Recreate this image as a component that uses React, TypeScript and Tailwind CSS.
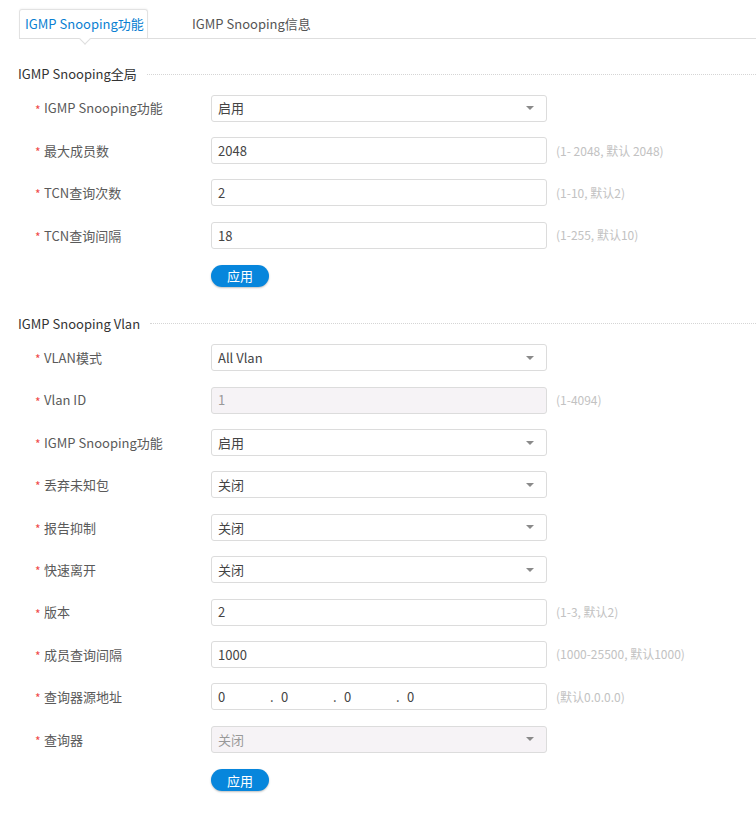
import React from "react";

type Row = {
  label: string;
  kind: "select" | "input" | "ip";
  value?: string;
  hint?: string;
  disabled?: boolean;
};

const globalRows: Row[] = [
  { label: "IGMP Snooping功能", kind: "select", value: "启用" },
  { label: "最大成员数", kind: "input", value: "2048", hint: "(1- 2048, 默认 2048)" },
  { label: "TCN查询次数", kind: "input", value: "2", hint: "(1-10, 默认2)" },
  { label: "TCN查询间隔", kind: "input", value: "18", hint: "(1-255, 默认10)" },
];

const vlanRows: Row[] = [
  { label: "VLAN模式", kind: "select", value: "All Vlan" },
  { label: "Vlan ID", kind: "input", value: "1", hint: "(1-4094)", disabled: true },
  { label: "IGMP Snooping功能", kind: "select", value: "启用" },
  { label: "丢弃未知包", kind: "select", value: "关闭" },
  { label: "报告抑制", kind: "select", value: "关闭" },
  { label: "快速离开", kind: "select", value: "关闭" },
  { label: "版本", kind: "input", value: "2", hint: "(1-3, 默认2)" },
  { label: "成员查询间隔", kind: "input", value: "1000", hint: "(1000-25500, 默认1000)" },
  { label: "查询器源地址", kind: "ip", hint: "(默认0.0.0.0)" },
  { label: "查询器", kind: "select", value: "关闭", disabled: true },
];

function Field({ row }: { row: Row }) {
  const box =
    "w-[336px] h-[27px] flex items-center rounded-[3px] border " +
    (row.disabled ? "bg-[#f6f3f6] border-[#dcdcdc] text-[#999]" : "bg-white border-[#dcdcdc] text-[#444]");

  if (row.kind === "select") {
    return (
      <div className={box + " pl-[6px] pr-[12px] justify-between"}>
        <span>{row.value}</span>
        {/* arrow */}
        <span className="w-0 h-0 border-l-[4px] border-r-[4px] border-t-[4px] border-l-transparent border-r-transparent border-t-[#8a8a8a]" />
      </div>
    );
  }
  if (row.kind === "ip") {
    return (
      <div className={box + " pl-[6px]"}>
        {[0, 1, 2, 3].map((i) => (
          <React.Fragment key={i}>
            <span className="w-[52px]">0</span>
            {i < 3 && <span className="w-[11px]">.</span>}
          </React.Fragment>
        ))}
      </div>
    );
  }
  return <div className={box + " pl-[6px]"}>{row.value}</div>;
}

function FormRow({ row }: { row: Row }) {
  return (
    <div className="h-[42.4px] flex items-center">
      <div className="w-[211px] pl-[35px] flex items-center text-[#5a5a5a]">
        <span className="text-[#f04a4a] w-[9px] text-[12px] leading-none pt-[3px]">*</span>
        <span>{row.label}</span>
      </div>
      <Field row={row} />
      {row.hint && <span className="ml-[9px] text-[12px] text-[#c2c2c2]">{row.hint}</span>}
    </div>
  );
}

function SectionTitle({ title }: { title: string }) {
  return (
    <div className="h-[20px] flex items-center pl-[18px] text-[#333]">
      <span>{title}</span>
      <div className="flex-1 ml-[10px] border-t border-dotted border-[#d5d5d5]" />
    </div>
  );
}

function ApplyButton() {
  return (
    <div className="pl-[211px]">
      <button className="w-[58px] h-[22px] rounded-full bg-[#0786dc] text-white text-[13px] leading-none shadow-[0_1px_2px_rgba(0,0,0,0.25)]">
        应用
      </button>
    </div>
  );
}

export default function App() {
  return (
    <div
      className="w-full min-h-screen bg-white text-[13px] pb-[20px]"
      style={{ fontFamily: '"Noto Sans CJK SC", "Noto Sans", sans-serif' }}
    >
      {/* Tabs */}
      <div className="ml-[19px] pt-[9px] flex items-end border-b border-[#dedede]">
        <div className="relative h-[29px] w-[129px] border border-b-0 border-[#e2e2e2] rounded-t-[3px] flex items-center pl-[5px] text-[#0a7fd2] shadow-[0_-1px_2px_rgba(0,0,0,0.04)]">
          IGMP Snooping功能
          <span className="absolute left-[61px] -bottom-[5px] w-[8px] h-[8px] bg-white border-r border-b border-[#dedede] rotate-45" />
        </div>
        <div className="h-[29px] flex items-center pl-[44px] text-[#555]">IGMP Snooping信息</div>
      </div>

      <div className="mt-[25px]">
        <SectionTitle title="IGMP Snooping全局" />
        <div className="mt-[3px]">
          {globalRows.map((r, i) => (
            <FormRow key={i} row={r} />
          ))}
        </div>
        <div className="mt-[8px]">
          <ApplyButton />
        </div>
      </div>

      <div className="mt-[27px]">
        <SectionTitle title="IGMP Snooping Vlan" />
        <div className="mt-[3px]">
          {vlanRows.map((r, i) => (
            <FormRow key={i} row={r} />
          ))}
        </div>
        <div className="mt-[9px]">
          <ApplyButton />
        </div>
      </div>
    </div>
  );
}
